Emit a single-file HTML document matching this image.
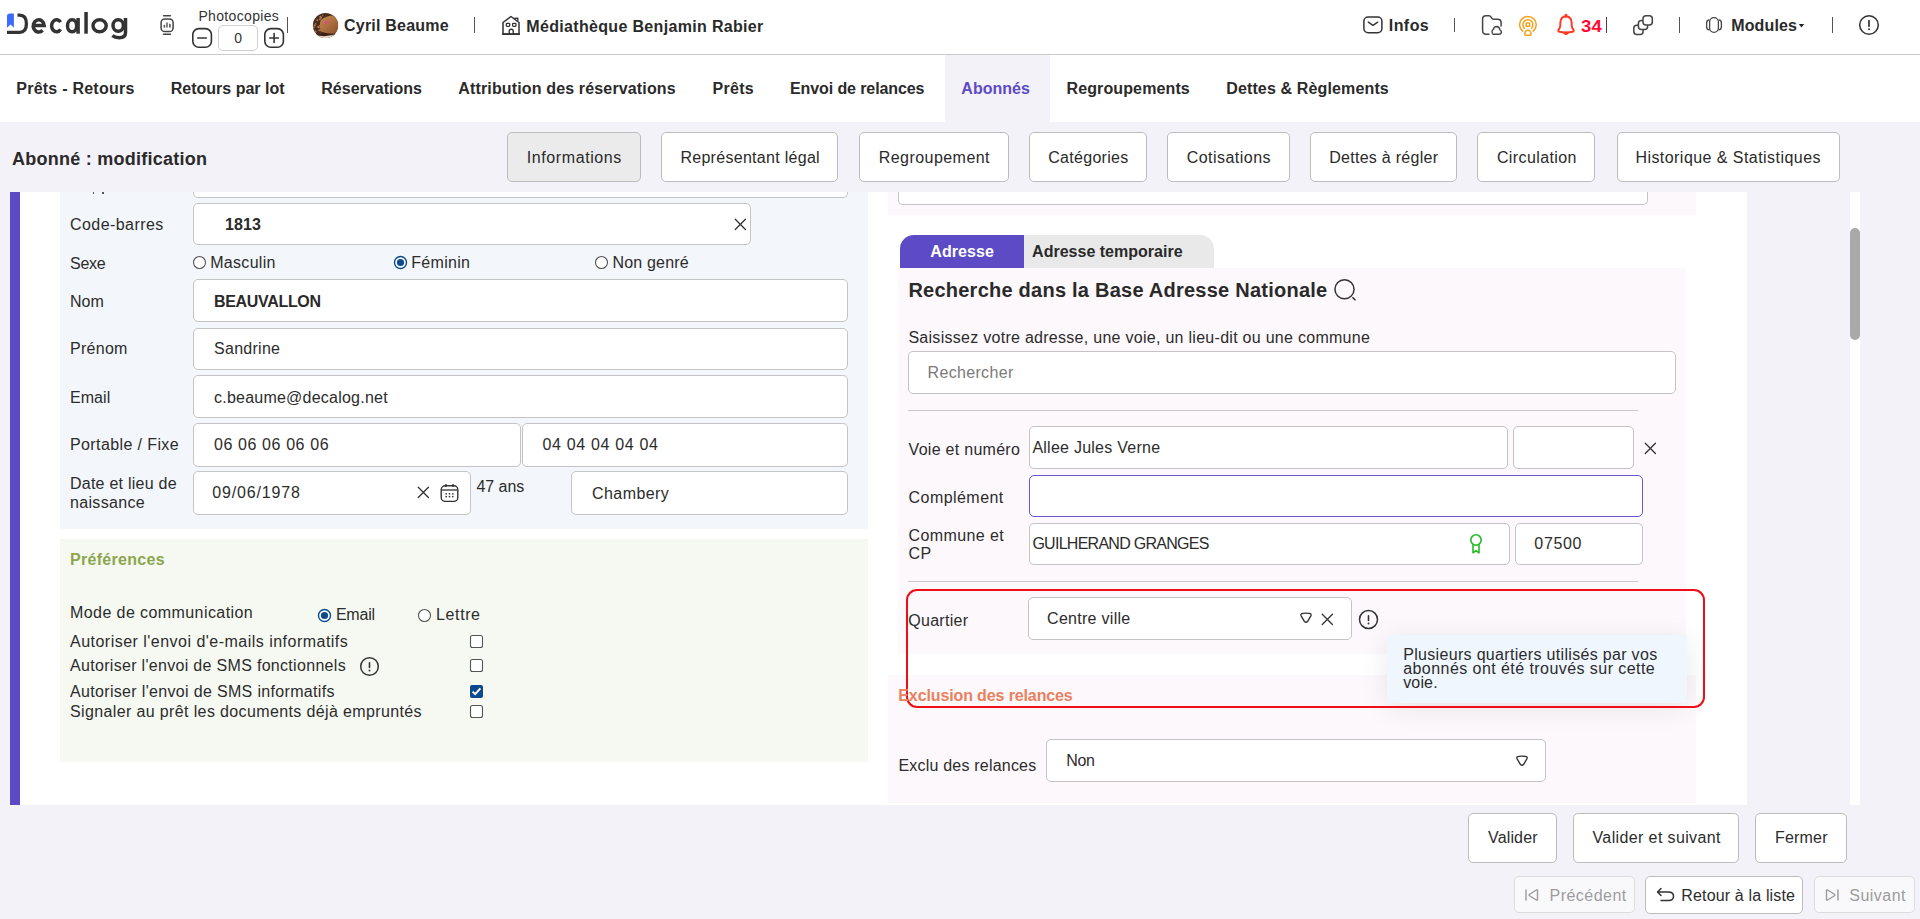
<!DOCTYPE html><html><head><meta charset="utf-8"><style>
html,body{margin:0;padding:0;}
body{width:1920px;height:919px;position:relative;overflow:hidden;background:#f3f2f8;font-family:"Liberation Sans",sans-serif;}
body div, body svg{position:absolute;}
.t{white-space:nowrap;}
</style></head><body>
<div style="left:0.00px;top:0.00px;width:1920.00px;height:54.00px;background:#fff"></div>
<div style="left:0.00px;top:54.00px;width:1920.00px;height:1.00px;background:#c9c9c9"></div>
<div style="left:0.00px;top:55.00px;width:1920.00px;height:67.00px;background:#fff"></div>
<div style="left:945.00px;top:55.00px;width:105.00px;height:67.00px;background:#f3f2f8"></div>
<svg style="left:0px;top:0px;" width="140" height="50" viewBox="0 0 140 50">
<path d="M7 16.2 Q7 13.5 10 13.5 H13.9 V27.7 L10.6 24.6 L7 27.7 Z" fill="#3d6bff"/>
<path d="M17.5 15.1 H19.6 Q26.4 15.1 26.4 23.7 Q26.4 32.3 19.6 32.3 H7" fill="none" stroke="#333" stroke-width="3.3"/>
<g fill="none" stroke="#333" stroke-width="3.5">
<path d="M33 25.6 H44.2 A5.5 6.05 0 1 0 42.6 30.2"/>
<path d="M60.6 22.2 A5 6.05 0 1 0 60.6 29.4"/>
<ellipse cx="72.1" cy="25.8" rx="4.6" ry="6.05"/>
<line x1="78.1" y1="18" x2="78.1" y2="33.7"/>
<line x1="86.05" y1="12" x2="86.05" y2="33.7"/>
<ellipse cx="99.6" cy="25.8" rx="6.6" ry="6.05"/>
<ellipse cx="118.2" cy="25.5" rx="5.2" ry="5.8"/>
<path d="M125.5 18 V32.8 Q125.5 37.7 119.2 37.7 Q115 37.7 112.3 35.6"/>
</g>
</svg>
<svg style="left:157px;top:12px;" width="20" height="26" viewBox="0 0 20 26">
<line x1="6.6" y1="3.8" x2="13.4" y2="3.8" stroke="#444" stroke-width="1.6" stroke-linecap="round"/>
<rect x="4.1" y="6.9" width="12" height="12.6" rx="3.6" fill="none" stroke="#444" stroke-width="1.5"/>
<line x1="7.4" y1="13.6" x2="7.4" y2="15" stroke="#555" stroke-width="1.6" stroke-linecap="round"/>
<line x1="10" y1="11" x2="10" y2="15" stroke="#666" stroke-width="1.6" stroke-linecap="round"/>
<line x1="12.9" y1="12.6" x2="12.9" y2="15" stroke="#555" stroke-width="1.6" stroke-linecap="round"/>
<line x1="6.6" y1="22.2" x2="13.4" y2="22.2" stroke="#444" stroke-width="1.6" stroke-linecap="round"/>
</svg>
<div class="t" style="left:198.40px;top:9.00px;font-size:14px;line-height:14px;font-weight:400;color:#333;letter-spacing:0.34px;">Photocopies</div>
<svg style="left:190px;top:26px;" width="24" height="24" viewBox="0 0 24 24"><rect x="2.8" y="2.6" width="18.6" height="18.6" rx="6" fill="none" stroke="#333" stroke-width="1.6"/><line x1="7.8" y1="12" x2="16.4" y2="12" stroke="#333" stroke-width="1.6" stroke-linecap="round"/></svg>
<div style="left:218.00px;top:25.00px;width:40.00px;height:26.00px;background:#fff;border:1px solid #cfcfcf;border-radius:5px;box-sizing:border-box"></div>
<div class="t" style="left:234.20px;top:31.00px;font-size:14px;line-height:14px;font-weight:400;color:#333;letter-spacing:0.00px;">0</div>
<svg style="left:262px;top:26px;" width="24" height="24" viewBox="0 0 24 24"><rect x="2.8" y="2.6" width="18.6" height="18.6" rx="6" fill="none" stroke="#333" stroke-width="1.6"/><line x1="7.8" y1="12" x2="16.4" y2="12" stroke="#333" stroke-width="1.6" stroke-linecap="round"/><line x1="12.1" y1="7.6" x2="12.1" y2="16.4" stroke="#333" stroke-width="1.6" stroke-linecap="round"/></svg>
<div style="left:287.00px;top:17.00px;width:1.00px;height:16.00px;background:#555"></div>
<svg style="left:312px;top:12px;" width="27" height="27" viewBox="0 0 27 27"><defs><clipPath id="avc"><circle cx="13.5" cy="13.5" r="12.6"/></clipPath><linearGradient id="cake" x1="0" y1="0" x2="1" y2="1"><stop offset="0" stop-color="#c98a55"/><stop offset="1" stop-color="#8a4f2a"/></linearGradient></defs>
<g clip-path="url(#avc)"><rect width="27" height="27" fill="#4a2c1c"/><circle cx="3.6" cy="11.8" r="0.8" fill="#b07a50"/><circle cx="7.6" cy="13.3" r="0.6" fill="#b07a50"/><circle cx="1.1" cy="17.1" r="0.8" fill="#b07a50"/><circle cx="3.6" cy="19.9" r="0.9" fill="#b07a50"/><circle cx="10.2" cy="10.6" r="1.0" fill="#b07a50"/><circle cx="2.7" cy="13.4" r="1.1" fill="#b07a50"/><circle cx="6.8" cy="15.3" r="1.0" fill="#b07a50"/><circle cx="1.7" cy="15.6" r="1.0" fill="#b07a50"/><circle cx="4.3" cy="2.6" r="1.1" fill="#b07a50"/><circle cx="6.2" cy="14.9" r="1.1" fill="#b07a50"/><circle cx="8.9" cy="18.6" r="0.8" fill="#b07a50"/><circle cx="9.8" cy="10.0" r="1.2" fill="#b07a50"/><circle cx="10.7" cy="3.8" r="0.7" fill="#b07a50"/><circle cx="3.4" cy="19.4" r="0.9" fill="#b07a50"/><circle cx="7.9" cy="7.4" r="0.9" fill="#b07a50"/><circle cx="5.2" cy="8.3" r="1.0" fill="#b07a50"/><circle cx="7.4" cy="18.3" r="1.0" fill="#b07a50"/><circle cx="11.2" cy="17.4" r="1.2" fill="#b07a50"/><circle cx="8.4" cy="4.9" r="1.1" fill="#b07a50"/><circle cx="11.6" cy="18.3" r="0.9" fill="#b07a50"/><circle cx="8.9" cy="5.8" r="1.1" fill="#b07a50"/><circle cx="7.3" cy="7.1" r="0.6" fill="#b07a50"/>
<path d="M9 8 Q16 2 27 4 V22 Q18 24 10 21 Q6 15 9 8 Z" fill="url(#cake)"/>
<path d="M10 20 Q18 23 27 21 V23 Q18 26 9 23 Z" fill="#3a2014"/>
<path d="M0 22 Q13 27 27 21 V27 H0 Z" fill="#e6d6c6"/>
<circle cx="14.6" cy="10.2" r="1.5" fill="#e8409a"/></g></svg>
<div class="t" style="left:344.10px;top:18.00px;font-size:16px;line-height:16px;font-weight:700;color:#2a2a2a;letter-spacing:0.20px;">Cyril Beaume</div>
<div style="left:473.90px;top:17.00px;width:1.00px;height:16.00px;background:#555"></div>
<svg style="left:500px;top:13px;" width="24" height="24" viewBox="0 0 24 24"><path d="M3 21 V9.5 L11 3.5 L19 9.5 V21 Z" fill="none" stroke="#333" stroke-width="1.5" stroke-linejoin="round"/>
<path d="M14 5.5 L17.8 5.2 V8.2" fill="none" stroke="#333" stroke-width="1.3"/>
<rect x="6.3" y="10.3" width="3.4" height="3" rx="0.8" fill="none" stroke="#333" stroke-width="1.3"/>
<rect x="12.6" y="10.3" width="3.4" height="3" rx="0.8" fill="none" stroke="#333" stroke-width="1.3"/>
<path d="M9.2 21 V18 Q9.2 16.2 11.2 16.2 Q13.2 16.2 13.2 18 V21" fill="none" stroke="#333" stroke-width="1.4"/>
<line x1="2" y1="21.2" x2="20" y2="21.2" stroke="#333" stroke-width="1.6"/></svg>
<div class="t" style="left:526.25px;top:19.00px;font-size:16px;line-height:16px;font-weight:700;color:#2a2a2a;letter-spacing:0.33px;">Médiathèque Benjamin Rabier</div>
<svg style="left:1360px;top:14px;" width="26" height="22" viewBox="0 0 26 22"><rect x="3.9" y="3.05" width="18" height="15.7" rx="4.2" fill="none" stroke="#333" stroke-width="1.5"/><path d="M8.3 8.1 L13 11.3 L17.7 8.2" fill="none" stroke="#333" stroke-width="1.4" stroke-linecap="round" stroke-linejoin="round"/></svg>
<div class="t" style="left:1388.75px;top:18.00px;font-size:16px;line-height:16px;font-weight:700;color:#2a2a2a;letter-spacing:0.45px;">Infos</div>
<div style="left:1453.90px;top:18.00px;width:1.00px;height:14.00px;background:#555"></div>
<svg style="left:1480px;top:13px;" width="24" height="24" viewBox="0 0 24 24"><path d="M9 21.2 H6 Q2.6 21.2 2.6 17.5 V6.2 Q2.6 2.8 6 2.8 H8.8 Q10.4 2.8 11.4 4.6 Q12.2 6.2 13.6 6.2 H17.6 Q21.1 6.2 21.1 9.6 V13" fill="none" stroke="#444" stroke-width="1.5" stroke-linecap="round"/>
<path d="M13.2 21.2 H18.6 Q21.4 21.2 21.4 19 Q21.4 17.3 19.8 16.8 Q19.5 13.6 16.6 13.5 Q13.8 13.5 13.4 16.4 Q11.9 17 12 19 Q12.2 21.2 13.2 21.2 Z" fill="none" stroke="#444" stroke-width="1.4"/></svg>
<svg style="left:1517px;top:13px;" width="22" height="24" viewBox="0 0 22 24"><path d="M5.6 18.1 A8.3 8.3 0 1 1 16.2 18.1" fill="none" stroke="#f7a11a" stroke-width="1.5" stroke-linecap="round"/>
<path d="M7.4 15.3 A5 5 0 1 1 14.4 15.3" fill="none" stroke="#f7a11a" stroke-width="1.5" stroke-linecap="round"/>
<circle cx="10.9" cy="11.7" r="1.9" fill="none" stroke="#f7a11a" stroke-width="1.5"/>
<path d="M10.9 16.9 Q12.8 16.9 13.6 19.2 L14.1 20.8 Q14.4 22.2 13 22.2 H8.8 Q7.4 22.2 7.7 20.8 L8.2 19.2 Q9 16.9 10.9 16.9 Z" fill="none" stroke="#f7a11a" stroke-width="1.5" stroke-linejoin="round"/></svg>
<svg style="left:1555px;top:13px;" width="22" height="24" viewBox="0 0 22 24"><path d="M11 3.2 Q5.7 3.6 5.4 9.2 L5.3 12.4 Q5.1 14.8 3.7 16.5 Q2.5 18.2 4.5 18.8 Q11 20.3 17.5 18.8 Q19.5 18.2 18.3 16.5 Q16.9 14.8 16.7 12.4 L16.6 9.2 Q16.3 3.6 11 3.2 Z" fill="none" stroke="#ff3b22" stroke-width="2" stroke-linejoin="round"/>
<line x1="11" y1="2" x2="11" y2="3.4" stroke="#ff3b22" stroke-width="2.6" stroke-linecap="round"/>
<path d="M7.9 19.4 Q11 23.8 14.1 19.4 Z" fill="#ff3b22" stroke="#ff3b22" stroke-width="1" stroke-linejoin="round"/></svg>
<div class="t" style="left:1580.90px;top:19.00px;font-size:16px;line-height:16px;font-weight:700;color:#ff0a34;letter-spacing:0.20px;transform:scaleX(1.16);transform-origin:0 0">34</div>
<div style="left:1605.90px;top:17.00px;width:1.00px;height:16.00px;background:#444"></div>
<svg style="left:1631px;top:13px;" width="24" height="24" viewBox="0 0 24 24"><rect x="2.8" y="12.2" width="9.3" height="9.3" rx="3" fill="none" stroke="#444" stroke-width="1.5"/>
<rect x="7.4" y="7.4" width="9.2" height="9.2" rx="3" fill="#fff" stroke="#444" stroke-width="1.5"/>
<rect x="12" y="2.8" width="9.3" height="9.3" rx="3" fill="#fff" stroke="#444" stroke-width="1.5"/></svg>
<div style="left:1679.00px;top:17.00px;width:1.00px;height:16.00px;background:#555"></div>
<svg style="left:1704px;top:15px;" width="20" height="20" viewBox="0 0 20 20"><rect x="5.6" y="2.6" width="8.8" height="14.8" rx="4.4" fill="none" stroke="#444" stroke-width="1.3"/>
<path d="M5.4 4.9 Q2.6 5.2 2.6 8 V11.8 Q2.6 14.6 5.4 14.9" fill="none" stroke="#444" stroke-width="1.3"/>
<path d="M14.6 4.9 Q17.4 5.2 17.4 8 V11.8 Q17.4 14.6 14.6 14.9" fill="none" stroke="#444" stroke-width="1.3"/></svg>
<div class="t" style="left:1731.20px;top:18.00px;font-size:16px;line-height:16px;font-weight:700;color:#2a2a2a;letter-spacing:0.15px;">Modules</div>
<svg style="left:1798px;top:23px;" width="8" height="6" viewBox="0 0 8 6"><path d="M0.8 1 H6.2 L3.5 4.4 Z" fill="#222"/></svg>
<div style="left:1832.00px;top:17.00px;width:1.00px;height:16.00px;background:#555"></div>
<svg style="left:1858px;top:14px;" width="22" height="22" viewBox="0 0 22 22"><circle cx="11" cy="11" r="9.3" fill="none" stroke="#333" stroke-width="1.5"/><line x1="11" y1="6.5" x2="11" y2="12.2" stroke="#333" stroke-width="1.7" stroke-linecap="round"/><circle cx="11" cy="15.3" r="1" fill="#333"/></svg>
<div class="t" style="left:16.25px;top:81.00px;font-size:16px;line-height:16px;font-weight:700;color:#2a2a2a;letter-spacing:0.24px;">Prêts - Retours</div>
<div class="t" style="left:170.75px;top:81.00px;font-size:16px;line-height:16px;font-weight:700;color:#2a2a2a;letter-spacing:-0.00px;">Retours par lot</div>
<div class="t" style="left:321.25px;top:81.00px;font-size:16px;line-height:16px;font-weight:700;color:#2a2a2a;letter-spacing:0.02px;">Réservations</div>
<div class="t" style="left:458.25px;top:81.00px;font-size:16px;line-height:16px;font-weight:700;color:#2a2a2a;letter-spacing:0.15px;">Attribution des réservations</div>
<div class="t" style="left:712.50px;top:81.00px;font-size:16px;line-height:16px;font-weight:700;color:#2a2a2a;letter-spacing:0.31px;">Prêts</div>
<div class="t" style="left:790.00px;top:81.00px;font-size:16px;line-height:16px;font-weight:700;color:#2a2a2a;letter-spacing:-0.10px;">Envoi de relances</div>
<div class="t" style="left:961.30px;top:81.00px;font-size:16px;line-height:16px;font-weight:700;color:#5c4bc4;letter-spacing:0.03px;">Abonnés</div>
<div class="t" style="left:1066.50px;top:81.00px;font-size:16px;line-height:16px;font-weight:700;color:#2a2a2a;letter-spacing:0.12px;">Regroupements</div>
<div class="t" style="left:1226.20px;top:81.00px;font-size:16px;line-height:16px;font-weight:700;color:#2a2a2a;letter-spacing:0.14px;">Dettes &amp; Règlements</div>
<div class="t" style="left:12.00px;top:149.50px;font-size:18px;line-height:18px;font-weight:700;color:#2a2a2a;letter-spacing:0.25px;">Abonné : modification</div>
<div style="left:507.00px;top:132.00px;width:134.00px;height:50.00px;background:#ebebeb;border:1px solid #bdbdbd;border-radius:5px;box-sizing:border-box"></div>
<div class="t" style="left:526.80px;top:149.50px;font-size:16px;line-height:16px;font-weight:400;color:#2a2a2a;letter-spacing:0.59px;">Informations</div>
<div style="left:661.30px;top:132.00px;width:177.20px;height:50.00px;background:#fff;border:1px solid #bdbdbd;border-radius:5px;box-sizing:border-box"></div>
<div class="t" style="left:680.40px;top:149.50px;font-size:16px;line-height:16px;font-weight:400;color:#2a2a2a;letter-spacing:0.29px;">Représentant légal</div>
<div style="left:859.25px;top:132.00px;width:149.50px;height:50.00px;background:#fff;border:1px solid #bdbdbd;border-radius:5px;box-sizing:border-box"></div>
<div class="t" style="left:878.75px;top:149.50px;font-size:16px;line-height:16px;font-weight:400;color:#2a2a2a;letter-spacing:0.45px;">Regroupement</div>
<div style="left:1029.25px;top:132.00px;width:117.50px;height:50.00px;background:#fff;border:1px solid #bdbdbd;border-radius:5px;box-sizing:border-box"></div>
<div class="t" style="left:1048.25px;top:149.50px;font-size:16px;line-height:16px;font-weight:400;color:#2a2a2a;letter-spacing:0.29px;">Catégories</div>
<div style="left:1167.25px;top:132.00px;width:122.75px;height:50.00px;background:#fff;border:1px solid #bdbdbd;border-radius:5px;box-sizing:border-box"></div>
<div class="t" style="left:1186.75px;top:149.50px;font-size:16px;line-height:16px;font-weight:400;color:#2a2a2a;letter-spacing:0.46px;">Cotisations</div>
<div style="left:1310.20px;top:132.00px;width:146.40px;height:50.00px;background:#fff;border:1px solid #bdbdbd;border-radius:5px;box-sizing:border-box"></div>
<div class="t" style="left:1329.20px;top:149.50px;font-size:16px;line-height:16px;font-weight:400;color:#2a2a2a;letter-spacing:0.28px;">Dettes à régler</div>
<div style="left:1477.30px;top:132.00px;width:118.20px;height:50.00px;background:#fff;border:1px solid #bdbdbd;border-radius:5px;box-sizing:border-box"></div>
<div class="t" style="left:1496.90px;top:149.50px;font-size:16px;line-height:16px;font-weight:400;color:#2a2a2a;letter-spacing:0.40px;">Circulation</div>
<div style="left:1616.50px;top:132.00px;width:223.10px;height:50.00px;background:#fff;border:1px solid #bdbdbd;border-radius:5px;box-sizing:border-box"></div>
<div class="t" style="left:1635.40px;top:149.50px;font-size:16px;line-height:16px;font-weight:400;color:#2a2a2a;letter-spacing:0.45px;">Historique &amp; Statistiques</div>
<div style="left:10.00px;top:192.00px;width:10.00px;height:613.00px;background:#5c4bc4"></div>
<div style="left:20.00px;top:192.00px;width:1727.00px;height:613.00px;background:#fff"></div>
<div style="left:60.00px;top:192.00px;width:808.00px;height:336.50px;background:#f3f6fa"></div>
<div style="left:60.00px;top:539.00px;width:808.00px;height:223.00px;background:#f6f9f2"></div>
<div style="left:888.00px;top:192.00px;width:808.00px;height:23.00px;background:#fcf8fb"></div>
<div style="left:898.00px;top:268.00px;width:788.00px;height:386.00px;background:#fcf8fb"></div>
<div style="left:888.00px;top:675.00px;width:808.00px;height:128.00px;background:#fcf8fb"></div>
<div style="left:193.00px;top:192.00px;width:655.00px;height:5.50px;background:#fff;border:1px solid #c4c4c4;border-top:none;border-radius:0 0 5px 5px;box-sizing:border-box"></div>
<div style="left:898.00px;top:192.00px;width:750.00px;height:12.50px;background:#fff;border:1px solid #c4c4c4;border-top:none;border-radius:0 0 5px 5px;box-sizing:border-box"></div>
<div style="left:92.50px;top:192.00px;width:1.50px;height:2.00px;background:#555"></div>
<div style="left:102.20px;top:192.00px;width:1.50px;height:2.00px;background:#555"></div>
<div class="t" style="left:70.00px;top:216.60px;font-size:16px;line-height:16px;font-weight:400;color:#2c2c2c;letter-spacing:0.43px;">Code-barres</div>
<div style="left:193.00px;top:202.70px;width:557.50px;height:42.60px;background:#fff;border:1px solid #c4c4c4;border-radius:5px;box-sizing:border-box"></div>
<div class="t" style="left:225.00px;top:216.60px;font-size:16px;line-height:16px;font-weight:700;color:#2a2a2a;letter-spacing:0.14px;">1813</div>
<svg style="left:733.5px;top:217.9px;" width="14" height="14" viewBox="0 0 14 14"><path d="M1.25 1.25 L11.45 11.45 M11.45 1.25 L1.25 11.45" stroke="#333" stroke-width="1.3" stroke-linecap="round"/></svg>
<div class="t" style="left:70.00px;top:255.80px;font-size:16px;line-height:16px;font-weight:400;color:#2c2c2c;letter-spacing:-0.26px;">Sexe</div>
<svg style="left:192.2px;top:254.7px;" width="15" height="15" viewBox="0 0 15 15"><circle cx="7.5" cy="7.5" r="6" fill="#fff" stroke="#555" stroke-width="1.1"/></svg>
<div class="t" style="left:210.20px;top:254.50px;font-size:16px;line-height:16px;font-weight:400;color:#2c2c2c;letter-spacing:0.31px;">Masculin</div>
<svg style="left:392.7px;top:254.7px;" width="15" height="15" viewBox="0 0 15 15"><circle cx="7.5" cy="7.5" r="6" fill="#fff" stroke="#0b4b8c" stroke-width="1.4"/><circle cx="7.5" cy="7.5" r="3.6" fill="#0b4b8c"/></svg>
<div class="t" style="left:411.20px;top:254.50px;font-size:16px;line-height:16px;font-weight:400;color:#2c2c2c;letter-spacing:0.32px;">Féminin</div>
<svg style="left:593.9px;top:254.7px;" width="15" height="15" viewBox="0 0 15 15"><circle cx="7.5" cy="7.5" r="6" fill="#fff" stroke="#555" stroke-width="1.1"/></svg>
<div class="t" style="left:612.40px;top:254.50px;font-size:16px;line-height:16px;font-weight:400;color:#2c2c2c;letter-spacing:0.20px;">Non genré</div>
<div class="t" style="left:70.00px;top:293.60px;font-size:16px;line-height:16px;font-weight:400;color:#2c2c2c;letter-spacing:0.06px;">Nom</div>
<div style="left:193.00px;top:279.20px;width:654.50px;height:43.10px;background:#fff;border:1px solid #c4c4c4;border-radius:5px;box-sizing:border-box"></div>
<div class="t" style="left:214.00px;top:293.60px;font-size:16px;line-height:16px;font-weight:700;color:#2a2a2a;letter-spacing:-0.32px;">BEAUVALLON</div>
<div class="t" style="left:70.00px;top:341.40px;font-size:16px;line-height:16px;font-weight:400;color:#2c2c2c;letter-spacing:0.28px;">Prénom</div>
<div style="left:193.00px;top:327.50px;width:654.50px;height:42.60px;background:#fff;border:1px solid #c4c4c4;border-radius:5px;box-sizing:border-box"></div>
<div class="t" style="left:214.00px;top:341.40px;font-size:16px;line-height:16px;font-weight:400;color:#2c2c2c;letter-spacing:0.28px;">Sandrine</div>
<div class="t" style="left:70.00px;top:389.50px;font-size:16px;line-height:16px;font-weight:400;color:#2c2c2c;letter-spacing:0.05px;">Email</div>
<div style="left:193.00px;top:375.30px;width:654.50px;height:42.80px;background:#fff;border:1px solid #c4c4c4;border-radius:5px;box-sizing:border-box"></div>
<div class="t" style="left:214.00px;top:389.50px;font-size:16px;line-height:16px;font-weight:400;color:#2c2c2c;letter-spacing:0.23px;">c.beaume@decalog.net</div>
<div class="t" style="left:70.00px;top:437.40px;font-size:16px;line-height:16px;font-weight:400;color:#2c2c2c;letter-spacing:0.39px;">Portable / Fixe</div>
<div style="left:193.00px;top:423.00px;width:327.50px;height:44.00px;background:#fff;border:1px solid #c4c4c4;border-radius:5px;box-sizing:border-box"></div>
<div style="left:521.50px;top:423.00px;width:326.50px;height:44.00px;background:#fff;border:1px solid #c4c4c4;border-radius:5px;box-sizing:border-box"></div>
<div class="t" style="left:214.10px;top:437.40px;font-size:16px;line-height:16px;font-weight:400;color:#2c2c2c;letter-spacing:0.59px;">06 06 06 06 06</div>
<div class="t" style="left:542.50px;top:437.40px;font-size:16px;line-height:16px;font-weight:400;color:#2c2c2c;letter-spacing:0.67px;">04 04 04 04 04</div>
<div class="t" style="left:70.00px;top:476.40px;font-size:16px;line-height:16px;font-weight:400;color:#2c2c2c;letter-spacing:0.24px;">Date et lieu de</div>
<div class="t" style="left:70.00px;top:494.70px;font-size:16px;line-height:16px;font-weight:400;color:#2c2c2c;letter-spacing:0.34px;">naissance</div>
<div style="left:193.00px;top:471.00px;width:277.50px;height:44.00px;background:#fff;border:1px solid #c4c4c4;border-radius:5px;box-sizing:border-box"></div>
<div class="t" style="left:212.20px;top:485.00px;font-size:16px;line-height:16px;font-weight:400;color:#2c2c2c;letter-spacing:0.86px;">09/06/1978</div>
<svg style="left:416.9px;top:486.3px;" width="14" height="14" viewBox="0 0 14 14"><path d="M1.25 1.25 L11.45 11.45 M11.45 1.25 L1.25 11.45" stroke="#333" stroke-width="1.3" stroke-linecap="round"/></svg>
<svg style="left:439px;top:482px;" width="22" height="22" viewBox="0 0 22 22"><rect x="2.2" y="3.8" width="16.6" height="15.6" rx="4" fill="none" stroke="#333" stroke-width="1.4"/>
<line x1="2.2" y1="8" x2="18.8" y2="8" stroke="#333" stroke-width="1.3"/>
<line x1="7" y1="2" x2="7" y2="5" stroke="#333" stroke-width="1.4"/><line x1="14" y1="2" x2="14" y2="5" stroke="#333" stroke-width="1.4"/>
<g fill="#333"><circle cx="7.2" cy="11.8" r="0.85"/><circle cx="10.5" cy="11.8" r="0.85"/><circle cx="13.8" cy="11.8" r="0.85"/><circle cx="7.2" cy="14.6" r="0.85"/><circle cx="10.5" cy="14.6" r="0.85"/><circle cx="13.8" cy="14.6" r="0.85"/></g></svg>
<div class="t" style="left:476.40px;top:478.50px;font-size:16px;line-height:16px;font-weight:400;color:#2c2c2c;letter-spacing:-0.03px;">47 ans</div>
<div style="left:571.00px;top:471.00px;width:277.00px;height:44.00px;background:#fff;border:1px solid #c4c4c4;border-radius:5px;box-sizing:border-box"></div>
<div class="t" style="left:592.10px;top:485.60px;font-size:16px;line-height:16px;font-weight:400;color:#2c2c2c;letter-spacing:0.41px;">Chambery</div>
<div class="t" style="left:70.00px;top:552.00px;font-size:16px;line-height:16px;font-weight:700;color:#8ca64e;letter-spacing:0.30px;">Préférences</div>
<div class="t" style="left:70.00px;top:604.90px;font-size:16px;line-height:16px;font-weight:400;color:#2c2c2c;letter-spacing:0.42px;">Mode de communication</div>
<svg style="left:316.7px;top:608px;" width="15" height="15" viewBox="0 0 15 15"><circle cx="7.5" cy="7.5" r="6" fill="#fff" stroke="#0b4b8c" stroke-width="1.4"/><circle cx="7.5" cy="7.5" r="3.6" fill="#0b4b8c"/></svg>
<div class="t" style="left:335.90px;top:607.30px;font-size:16px;line-height:16px;font-weight:400;color:#2c2c2c;letter-spacing:-0.20px;">Email</div>
<svg style="left:416.9px;top:608px;" width="15" height="15" viewBox="0 0 15 15"><circle cx="7.5" cy="7.5" r="6" fill="#fff" stroke="#555" stroke-width="1.1"/></svg>
<div class="t" style="left:436.10px;top:607.30px;font-size:16px;line-height:16px;font-weight:400;color:#2c2c2c;letter-spacing:0.60px;">Lettre</div>
<div class="t" style="left:70.00px;top:634.40px;font-size:16px;line-height:16px;font-weight:400;color:#2c2c2c;letter-spacing:0.48px;">Autoriser l'envoi d'e-mails informatifs</div>
<svg style="left:469px;top:634px;" width="15" height="15" viewBox="0 0 15 15"><rect x="1.5" y="1.5" width="12" height="12" rx="2" fill="#fff" stroke="#555" stroke-width="1.1"/></svg>
<div class="t" style="left:70.00px;top:658.30px;font-size:16px;line-height:16px;font-weight:400;color:#2c2c2c;letter-spacing:0.31px;">Autoriser l'envoi de SMS fonctionnels</div>
<svg style="left:357.5px;top:655.1px;" width="23" height="23" viewBox="0 0 23 23"><circle cx="11.5" cy="11.5" r="8.799999999999999" fill="none" stroke="#333" stroke-width="1.5"/><line x1="11.5" y1="7.7" x2="11.5" y2="12.4" stroke="#333" stroke-width="1.6" stroke-linecap="round"/><circle cx="11.5" cy="15.5" r="0.95" fill="#333"/></svg>
<svg style="left:469px;top:658px;" width="15" height="15" viewBox="0 0 15 15"><rect x="1.5" y="1.5" width="12" height="12" rx="2" fill="#fff" stroke="#555" stroke-width="1.1"/></svg>
<div class="t" style="left:70.00px;top:684.00px;font-size:16px;line-height:16px;font-weight:400;color:#2c2c2c;letter-spacing:0.33px;">Autoriser l'envoi de SMS informatifs</div>
<svg style="left:469px;top:683.8px;" width="15" height="15" viewBox="0 0 15 15"><rect x="1" y="1" width="13" height="13" rx="2" fill="#0b4b8c"/><path d="M3.6 7.6 L6.2 10.2 L11.4 4.4" fill="none" stroke="#fff" stroke-width="1.9"/></svg>
<div class="t" style="left:70.00px;top:703.80px;font-size:16px;line-height:16px;font-weight:400;color:#2c2c2c;letter-spacing:0.37px;">Signaler au prêt les documents déjà empruntés</div>
<svg style="left:469px;top:704px;" width="15" height="15" viewBox="0 0 15 15"><rect x="1.5" y="1.5" width="12" height="12" rx="2" fill="#fff" stroke="#555" stroke-width="1.1"/></svg>
<svg style="left:900px;top:235px;" width="314" height="33" viewBox="0 0 314 33"><path d="M0 33 V14 A14 14 0 0 1 14 0 H124 V33 Z" fill="#5c4bc4"/><path d="M124 0 H300 A14 14 0 0 1 314 14 V33 H124 Z" fill="#e9e9e9"/></svg>
<div class="t" style="left:930.30px;top:243.80px;font-size:16px;line-height:16px;font-weight:700;color:#fff;letter-spacing:0.08px;">Adresse</div>
<div class="t" style="left:1032.10px;top:243.80px;font-size:16px;line-height:16px;font-weight:700;color:#2a2a2a;letter-spacing:0.01px;">Adresse temporaire</div>
<div class="t" style="left:908.40px;top:279.70px;font-size:20px;line-height:20px;font-weight:700;color:#2a2a2a;letter-spacing:0.24px;">Recherche dans la Base Adresse Nationale</div>
<svg style="left:1332px;top:279px;" width="26" height="24" viewBox="0 0 26 24"><circle cx="12.5" cy="10.3" r="9.55" fill="none" stroke="#333" stroke-width="1.5"/><line x1="20.9" y1="18.7" x2="23" y2="20.8" stroke="#333" stroke-width="1.6" stroke-linecap="round"/></svg>
<div class="t" style="left:908.40px;top:330.00px;font-size:16px;line-height:16px;font-weight:400;color:#2c2c2c;letter-spacing:0.28px;">Saisissez votre adresse, une voie, un lieu-dit ou une commune</div>
<div style="left:908.40px;top:351.00px;width:767.20px;height:43.30px;background:#fff;border:1px solid #c4c4c4;border-radius:5px;box-sizing:border-box"></div>
<div class="t" style="left:927.50px;top:365.30px;font-size:16px;line-height:16px;font-weight:400;color:#7a7a7a;letter-spacing:0.34px;">Rechercher</div>
<div style="left:908.00px;top:409.50px;width:730.00px;height:1.00px;background:#cbc8cc"></div>
<div class="t" style="left:908.60px;top:442.00px;font-size:16px;line-height:16px;font-weight:400;color:#2c2c2c;letter-spacing:0.28px;">Voie et numéro</div>
<div style="left:1028.50px;top:426.40px;width:479.90px;height:43.10px;background:#fff;border:1px solid #c4c4c4;border-radius:5px;box-sizing:border-box"></div>
<div style="left:1513.20px;top:426.40px;width:120.50px;height:43.10px;background:#fff;border:1px solid #c4c4c4;border-radius:5px;box-sizing:border-box"></div>
<div class="t" style="left:1032.40px;top:440.20px;font-size:16px;line-height:16px;font-weight:400;color:#2c2c2c;letter-spacing:0.25px;">Allee Jules Verne</div>
<svg style="left:1644.0px;top:441.9px;" width="14" height="14" viewBox="0 0 14 14"><path d="M1.25 1.25 L11.45 11.45 M11.45 1.25 L1.25 11.45" stroke="#333" stroke-width="1.3" stroke-linecap="round"/></svg>
<div class="t" style="left:908.60px;top:490.10px;font-size:16px;line-height:16px;font-weight:400;color:#2c2c2c;letter-spacing:0.44px;">Complément</div>
<div style="left:1028.50px;top:474.50px;width:614.10px;height:42.80px;background:#fff;border:1.5px solid #6658d0;border-radius:5px;box-sizing:border-box"></div>
<div class="t" style="left:908.60px;top:527.90px;font-size:16px;line-height:16px;font-weight:400;color:#2c2c2c;letter-spacing:0.38px;">Commune et</div>
<div class="t" style="left:908.60px;top:546.30px;font-size:16px;line-height:16px;font-weight:400;color:#2c2c2c;letter-spacing:0.35px;">CP</div>
<div style="left:1028.50px;top:522.60px;width:481.90px;height:42.40px;background:#fff;border:1px solid #c4c4c4;border-radius:5px;box-sizing:border-box"></div>
<div style="left:1515.10px;top:522.60px;width:127.50px;height:42.70px;background:#fff;border:1px solid #c4c4c4;border-radius:5px;box-sizing:border-box"></div>
<div class="t" style="left:1032.40px;top:536.00px;font-size:16px;line-height:16px;font-weight:400;color:#2c2c2c;letter-spacing:-0.73px;">GUILHERAND GRANGES</div>
<svg style="left:1466px;top:532px;" width="20" height="24" viewBox="0 0 20 24"><circle cx="10" cy="8" r="5.2" fill="none" stroke="#22bb22" stroke-width="1.6"/><path d="M7 12.5 V20.8 L10 18.6 L13 20.8 V12.5" fill="none" stroke="#22bb22" stroke-width="1.6" stroke-linejoin="round"/></svg>
<div class="t" style="left:1534.30px;top:536.00px;font-size:16px;line-height:16px;font-weight:400;color:#2c2c2c;letter-spacing:0.68px;">07500</div>
<div style="left:908.00px;top:580.80px;width:730.00px;height:1.00px;background:#cbc8cc"></div>
<div class="t" style="left:908.20px;top:613.00px;font-size:16px;line-height:16px;font-weight:400;color:#2c2c2c;letter-spacing:0.31px;">Quartier</div>
<div style="left:1028.00px;top:597.40px;width:323.50px;height:43.10px;background:#fff;border:1px solid #c4c4c4;border-radius:5px;box-sizing:border-box"></div>
<div class="t" style="left:1047.10px;top:611.00px;font-size:16px;line-height:16px;font-weight:400;color:#2c2c2c;letter-spacing:0.28px;">Centre ville</div>
<svg style="left:1299.2px;top:611.4px;" width="14" height="13" viewBox="0 0 14 13"><path d="M7 2.1 Q10 2.1 11.4 2.7 Q12.6 3.3 12 4.6 L8.7 10.3 Q7 12.3 5.3 10.3 L2 4.6 Q1.4 3.3 2.6 2.7 Q4 2.1 7 2.1 Z" fill="none" stroke="#333" stroke-width="1.35" stroke-linejoin="round"/></svg>
<svg style="left:1320.5px;top:612.5px;" width="14" height="14" viewBox="0 0 14 14"><path d="M1.25 1.25 L11.45 11.45 M11.45 1.25 L1.25 11.45" stroke="#333" stroke-width="1.3" stroke-linecap="round"/></svg>
<svg style="left:1356.8px;top:608.1px;" width="23" height="23" viewBox="0 0 23 23"><circle cx="11.5" cy="11.5" r="9.0" fill="none" stroke="#333" stroke-width="1.5"/><line x1="11.5" y1="7.7" x2="11.5" y2="12.4" stroke="#333" stroke-width="1.6" stroke-linecap="round"/><circle cx="11.5" cy="15.5" r="0.95" fill="#333"/></svg>
<div style="left:1387.00px;top:634.80px;width:299.50px;height:67.90px;background:#eff6fe;box-shadow:0 4px 28px rgba(0,0,0,0.09)"></div>
<div class="t" style="left:1403.20px;top:647.10px;font-size:16px;line-height:16px;font-weight:400;color:#2c2c2c;letter-spacing:0.32px;">Plusieurs quartiers utilisés par vos</div>
<div class="t" style="left:1403.20px;top:660.70px;font-size:16px;line-height:16px;font-weight:400;color:#2c2c2c;letter-spacing:0.44px;">abonnés ont été trouvés sur cette</div>
<div class="t" style="left:1403.20px;top:674.50px;font-size:16px;line-height:16px;font-weight:400;color:#2c2c2c;letter-spacing:0.15px;">voie.</div>
<div style="left:906.00px;top:589.00px;width:799.00px;height:119.20px;border:2px solid #ee0f16;border-radius:11px;box-sizing:border-box"></div>
<div class="t" style="left:898.30px;top:687.60px;font-size:16px;line-height:16px;font-weight:700;color:#e8815d;letter-spacing:-0.12px;">Exclusion des relances</div>
<div class="t" style="left:898.50px;top:757.60px;font-size:16px;line-height:16px;font-weight:400;color:#2c2c2c;letter-spacing:0.20px;">Exclu des relances</div>
<div style="left:1046.25px;top:739.20px;width:499.25px;height:43.20px;background:#fff;border:1px solid #c4c4c4;border-radius:5px;box-sizing:border-box"></div>
<div class="t" style="left:1066.25px;top:753.00px;font-size:16px;line-height:16px;font-weight:400;color:#2c2c2c;letter-spacing:-0.30px;">Non</div>
<svg style="left:1515px;top:753.5px;" width="14" height="13" viewBox="0 0 14 13"><path d="M7 2.1 Q10 2.1 11.4 2.7 Q12.6 3.3 12 4.6 L8.7 10.3 Q7 12.3 5.3 10.3 L2 4.6 Q1.4 3.3 2.6 2.7 Q4 2.1 7 2.1 Z" fill="none" stroke="#333" stroke-width="1.35" stroke-linejoin="round"/></svg>
<div style="left:1850.00px;top:192.00px;width:10.00px;height:613.00px;background:#fff"></div>
<div style="left:1850.00px;top:228.00px;width:10.00px;height:112.00px;background:#a9a9a9;border-radius:5px"></div>
<div style="left:1468.25px;top:813.25px;width:88.50px;height:49.25px;background:#fff;border:1px solid #bdbdbd;border-radius:5px;box-sizing:border-box"></div>
<div class="t" style="left:1488.00px;top:830.25px;font-size:16px;line-height:16px;font-weight:400;color:#2c2c2c;letter-spacing:0.15px;">Valider</div>
<div style="left:1573.25px;top:813.25px;width:165.50px;height:49.25px;background:#fff;border:1px solid #bdbdbd;border-radius:5px;box-sizing:border-box"></div>
<div class="t" style="left:1592.50px;top:830.25px;font-size:16px;line-height:16px;font-weight:400;color:#2c2c2c;letter-spacing:0.38px;">Valider et suivant</div>
<div style="left:1755.25px;top:813.25px;width:91.50px;height:49.25px;background:#fff;border:1px solid #bdbdbd;border-radius:5px;box-sizing:border-box"></div>
<div class="t" style="left:1775.00px;top:830.25px;font-size:16px;line-height:16px;font-weight:400;color:#2c2c2c;letter-spacing:0.19px;">Fermer</div>
<div style="left:1514.25px;top:876.25px;width:120.25px;height:37.00px;background:#f9f9fc;border:1px solid #dcdcdc;border-radius:5px;box-sizing:border-box"></div>
<svg style="left:1523px;top:884px;" width="18" height="22" viewBox="0 0 18 22"><line x1="3" y1="6" x2="3" y2="16" stroke="#9a9a9a" stroke-width="1.4" stroke-linecap="round"/><path d="M14.5 6.5 V15.5 Q14.5 16.6 13.4 16 L6.6 11.8 Q5.6 11 6.6 10.2 L13.4 6 Q14.5 5.4 14.5 6.5 Z" fill="none" stroke="#9a9a9a" stroke-width="1.4"/></svg>
<div class="t" style="left:1549.50px;top:888.25px;font-size:16px;line-height:16px;font-weight:400;color:#9c9c9c;letter-spacing:0.48px;">Précédent</div>
<div style="left:1644.80px;top:876.25px;width:158.45px;height:37.50px;background:#fff;border:1px solid #bdbdbd;border-radius:5px;box-sizing:border-box"></div>
<svg style="left:1655px;top:883.5px;" width="22" height="20" viewBox="0 0 22 20"><path d="M6 4.5 L2.6 8 L6 11.5" fill="none" stroke="#333" stroke-width="1.5" stroke-linecap="round" stroke-linejoin="round"/><path d="M3 8 H13.5 Q18.5 8 18.5 12.3 Q18.5 16.6 13.5 16.6 H6" fill="none" stroke="#333" stroke-width="1.5" stroke-linecap="round"/></svg>
<div class="t" style="left:1681.25px;top:888.25px;font-size:16px;line-height:16px;font-weight:400;color:#2c2c2c;letter-spacing:0.16px;">Retour à la liste</div>
<div style="left:1814.25px;top:876.25px;width:100.25px;height:37.00px;background:#f9f9fc;border:1px solid #dcdcdc;border-radius:5px;box-sizing:border-box"></div>
<svg style="left:1823px;top:884px;" width="18" height="22" viewBox="0 0 18 22"><line x1="15" y1="6" x2="15" y2="16" stroke="#9a9a9a" stroke-width="1.4" stroke-linecap="round"/><path d="M3.5 6.5 V15.5 Q3.5 16.6 4.6 16 L11.4 11.8 Q12.4 11 11.4 10.2 L4.6 6 Q3.5 5.4 3.5 6.5 Z" fill="none" stroke="#9a9a9a" stroke-width="1.4"/></svg>
<div class="t" style="left:1849.25px;top:888.25px;font-size:16px;line-height:16px;font-weight:400;color:#9c9c9c;letter-spacing:0.48px;">Suivant</div>
</body></html>
